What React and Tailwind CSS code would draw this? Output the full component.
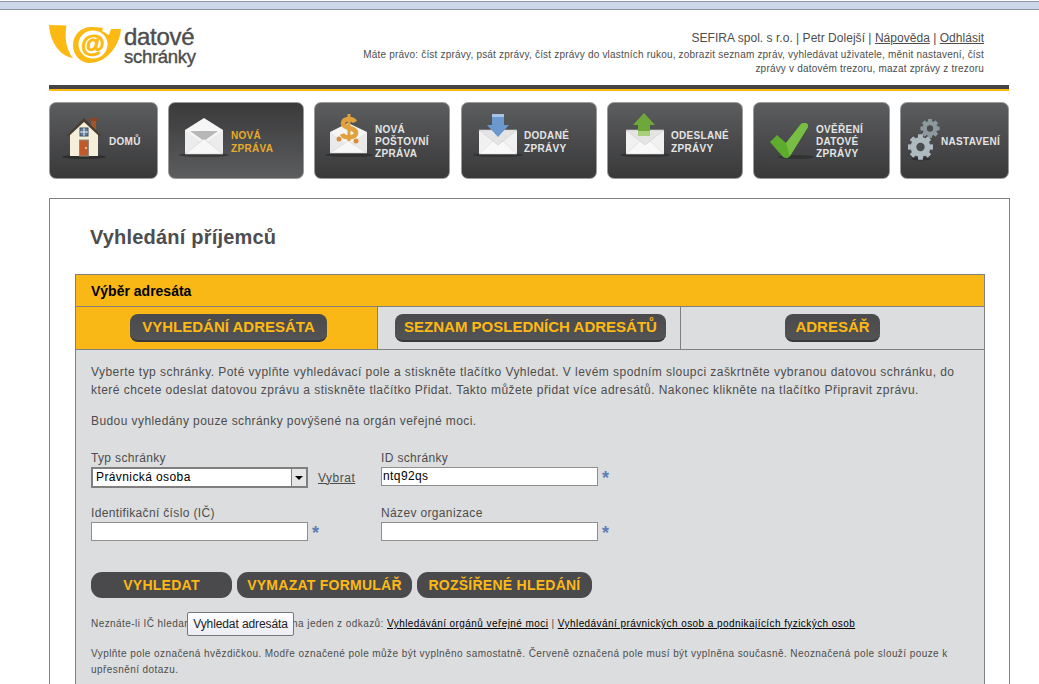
const navItems = [
  { w: 'w-[109px]', label: ['DOMŮ'], icon: <HouseIcon />, iconBox: 'w-[45px]' },
  { w: 'w-[136px]', label: ['NOVÁ', 'ZPRÁVA'], icon: <MailIcon />, active: true, iconBox: 'w-[48px]' },
  { w: 'w-[136px]', label: ['NOVÁ', 'POŠTOVNÍ', 'ZPRÁVA'], icon: <PostalIcon />, iconBox: 'w-[46px]' },
  { w: 'w-[136px] ml-[1px]', label: ['DODANÉ', 'ZPRÁVY'], icon: <InboxIcon />, iconBox: 'w-[48px]' },
  { w: 'w-[136px]', label: ['ODESLANÉ', 'ZPRÁVY'], icon: <SentIcon />, iconBox: 'w-[49px]' },
  { w: 'w-[137px]', label: ['OVĚŘENÍ', 'DATOVÉ', 'ZPRÁVY'], icon: <CheckIcon />, iconBox: 'w-[48px]' },
  { w: 'w-[109px]', label: ['NASTAVENÍ'], icon: <GearsIcon />, iconBox: 'w-[35px]', pad: 'pl-[5px]' },
];

// closed envelope, x0..x0+38, y 16..40 on the 48px icon canvas
function Envelope({ x = 0 }) {
  return (
    <g transform={`translate(${x},0)`}>
      <ellipse cx="19" cy="41" rx="25" ry="2" fill="#222" opacity="0.55" />
      <rect y="16" width="38" height="24" rx="1.5" fill="#f1f1f1" />
      <path d="M0 40 L14 27 L19 30 L24 27 L38 40 Z" fill="#f8f8f8" stroke="#d8d8d8" strokeWidth="0.6" />
      <path d="M0 16 L19 31 L38 16 Z" fill="#e4e4e4" stroke="#cdcdcd" strokeWidth="0.6" />
    </g>
  );
}

function Canvas({ children }) {
  return (
    <svg width="48" height="48" viewBox="0 0 48 48" className="block overflow-visible">
      {children}
    </svg>
  );
}

function HouseIcon() {
  return (
    <Canvas>
      <ellipse cx="20" cy="43" rx="22" ry="2" fill="#222" opacity="0.6" />
      <rect x="27" y="5" width="5" height="13" fill="#a4552c" />
      <rect x="26" y="4" width="7" height="3" fill="#8d4522" />
      <path d="M6 20 L20 6 L34 20 V42 H6 Z" fill="#f4eeda" />
      <path d="M3 21 L20 4 L37 21 L35 22 L20 8 L5 22 Z" fill="#4a3f33" />
      <rect x="16" y="14" width="8" height="8" fill="#5f7f9d" stroke="#3c4f60" />
      <path d="M20 14 V22 M16 18 H24" stroke="#e8eef2" strokeWidth="1" />
      <rect x="15.5" y="26" width="9" height="16" fill="#c05a28" stroke="#8d8a80" />
      <circle cx="22" cy="34" r="0.9" fill="#f5e6c0" />
    </Canvas>
  );
}

function MailIcon() {
  return (
    <Canvas>
      <ellipse cx="21" cy="41" rx="25" ry="2" fill="#222" opacity="0.55" />
      <path d="M2 16 L21 4 L40 16 V28 H2 Z" fill="#f6f6f6" />
      <path d="M7 17 H35 L21 27 Z" fill="#b7b7b7" />
      <path d="M2 16 L21 29 L40 16 V39 Q40 40 39 40 H3 Q2 40 2 39 Z" fill="#ececec" />
      <path d="M2 40 L21 25 L40 40 Z" fill="#f7f7f7" stroke="#d2d2d2" strokeWidth="0.6" />
    </Canvas>
  );
}

function PostalIcon() {
  return (
    <Canvas>
      <ellipse cx="20" cy="41" rx="24" ry="2" fill="#222" opacity="0.55" />
      <path d="M1 18 L19 9 L38 18 V30 H1 Z" fill="#f4f4f4" />
      <path d="M1 18 L19 31 L38 18 V39 H1 Z" fill="#e9e9e9" />
      <path d="M1 39 L19 27 L38 39 Z" fill="#f7f7f7" stroke="#d2d2d2" strokeWidth="0.6" />
      <path d="M26 8 C24 4 14 4 14 9 C14 15 27 13 27 19 C27 24 15 25 13 20" fill="none" stroke="#e0a13c" strokeWidth="4.6" />
      <path d="M20 0 V27" stroke="#e0a13c" strokeWidth="3" />
      <circle cx="10" cy="25" r="2.5" fill="#dd8d3a" />
      <circle cx="27" cy="27" r="2.5" fill="#dd8d3a" />
    </Canvas>
  );
}

function InboxIcon() {
  return (
    <Canvas>
      <Envelope x={3} />
      <path d="M16 0 H28 V11 H33 L22 23 L11 11 H16 Z" fill="#6b98cf" />
      <path d="M16 0 H28 V3 H16 Z" fill="#a5c4e8" />
    </Canvas>
  );
}

function SentIcon() {
  return (
    <Canvas>
      <Envelope x={4} />
      <path d="M22 -1 L33 11 H28 V22 H16 V11 H11 Z" fill="#6fa83a" />
      <path d="M16 17 H28 V22 H16 Z" fill="#a9cf7c" />
    </Canvas>
  );
}

function CheckIcon() {
  return (
    <Canvas>
      <ellipse cx="28" cy="43" rx="18" ry="2" fill="#222" opacity="0.5" />
      <path d="M2 28 L9 21 L18 29 L33 10 C36 8 41 9 40 13 L22 42 C20 45 17 44 15 43 Z" fill="#5fab2e" />
      <path d="M33 10 C36 8 41 9 40 13 L22 42 L18 29 Z" fill="#78be44" />
    </Canvas>
  );
}

function Gear({ cx, cy, r, fill }) {
  const teeth = [0, 45, 90, 135, 180, 225, 270, 315];
  return (
    <g>
      {teeth.map(a => (
        <rect key={a} x={cx - r * 0.24} y={cy - r * 1.25} width={r * 0.48} height={r * 2.5} fill={fill} transform={`rotate(${a} ${cx} ${cy})`} />
      ))}
      <circle cx={cx} cy={cy} r={r} fill={fill} />
      <circle cx={cx} cy={cy} r={r * 0.42} fill="#4b4c4e" />
    </g>
  );
}

function GearsIcon() {
  return (
    <Canvas>
      <ellipse cx="15" cy="45" rx="10" ry="1.5" fill="#222" opacity="0.6" />
      <Gear cx={24} cy={14.5} r={7.5} fill="#8e999f" />
      <Gear cx={14.5} cy={33} r={10} fill="#aeb9c0" />
    </Canvas>
  );
}

function Logo() {
  return (
    <div className="flex items-start h-[40px]">
      <svg width="73" height="40" viewBox="0 0 73 40" className="shrink-0">
        <path d="M0 0 L17.5 0.5 C15 14 18 26 24 33 C11 31 1 17 0 0 Z" fill="#fdb913" />
        <path d="M63 4 L72 4 C70 24 55 38 41 38 C31 38 24 30 24 20 C24 10 32 2 42 2 C50 2 55 3 63 4 Z" fill="#fdb913" />
        <ellipse cx="44" cy="19.5" rx="14.5" ry="14" fill="#fff" />
        <path d="M55 0 L63 1 L60 10 L53 6 Z" fill="#fff" />
        <text x="44" y="27" textAnchor="middle" fontFamily="Liberation Sans, sans-serif" fontWeight="700" fontSize="24" fill="#fdb913" stroke="#fdb913" strokeWidth="1.1">@</text>
      </svg>
      <div className="ml-[2px] text-[#4d4d4d] mt-[1px]">
        <div className="text-[24px] leading-[22px] tracking-[-0.3px] [-webkit-text-stroke:0.4px_#4d4d4d]">datové</div>
        <div className="text-[18.5px] leading-[17px] tracking-[-0.3px] [-webkit-text-stroke:0.4px_#4d4d4d]">schránky</div>
      </div>
    </div>
  );
}

function NavButton({ w, label, icon, active, iconBox, pad = 'pl-[14px]' }) {
  return (
    <div
      className={`${w} ${pad} h-[77px] flex rounded-[7px] border border-[#9a9a9a] ${
        active
          ? 'bg-gradient-to-b from-[#3a3a3b] to-[#5c5d5f]'
          : 'bg-gradient-to-b from-[#5c5d5f] to-[#39393a]'
      }`}
    >
      <div className={`${iconBox} shrink-0 pt-[11px]`}>{icon}</div>
      <div className={`self-center pt-[2px] text-[10px] font-bold tracking-[0.3px] ${label.length === 2 ? 'leading-[13px]' : 'leading-[12px]'} ${active ? 'text-[#e8ab2c]' : 'text-[#e4e4e4]'}`}>
        {label.map(l => (
          <div key={l}>{l}</div>
        ))}
      </div>
    </div>
  );
}

function PillButton({ children, className = '' }) {
  return (
    <span className={`inline-flex items-center justify-center h-[28px] rounded-[8px] border-b-2 border-[#38383a] bg-gradient-to-b from-[#4a4a4c] to-[#525355] text-[15px] font-bold text-[#fdb913] ${className}`}>
      {children}
    </span>
  );
}

function ActionButton({ children, className = '' }) {
  return (
    <span className={`inline-flex items-center justify-center h-[26px] rounded-[11px] bg-[#4a4a4c] text-[14px] tracking-[0.25px] font-bold text-[#fdb913] ${className}`}>
      {children}
    </span>
  );
}

function Field({ label, children }) {
  return (
    <div>
      <div className="text-[12px] leading-[14px] tracking-[0.35px] text-[#4d4d4d] mb-[2px]">{label}</div>
      {children}
    </div>
  );
}

function TextInput({ value = '' }) {
  return (
    <div className="flex items-center">
      <div className="w-[217px] h-[19px] bg-white border border-[#8f8f8f] text-[12px] leading-[17px] tracking-[0.4px] pl-[1px] text-black">{value}</div>
      <span className="ml-[4px] translate-y-[2px] text-[#5a7fb5] text-[18px] leading-[19px] font-bold">*</span>
    </div>
  );
}

export default function App() {
  return (
    <div className="h-[684px] overflow-hidden bg-white font-['Liberation_Sans',Arial,sans-serif]">
      <div className="h-[9px] mt-[1px] bg-[#ccd7ea] border-y border-[#8b95a5]" />
      <div className="ml-[49px] w-[960px] mt-[15px]">
        <header className="flex justify-between h-[60px]">
          <Logo />
          <div className="w-[650px] pr-[25px] text-right text-[#4d4d4d]">
            <div className="text-[12px] leading-[16px] mt-[5px] tracking-[0.03px]">
              SEFIRA spol. s r.o. | Petr Dolejší | <span className="underline">Nápověda</span> | <span className="underline">Odhlásit</span>
            </div>
            <div className="text-[10px] leading-[14px] mt-[2px] tracking-[0.2px]">
              Máte právo: číst zprávy, psát zprávy, číst zprávy do vlastních rukou, zobrazit seznam zpráv, vyhledávat uživatele, měnit nastavení, číst zprávy v datovém trezoru, mazat zprávy z trezoru
            </div>
          </div>
        </header>
        <div className="h-[6px] border-b-2 border-[#fdb913] bg-[#444446]" />
        <nav className="flex gap-[10px] mt-[11px]">
          {navItems.map(item => (
            <NavButton key={item.label.join(' ')} {...item} />
          ))}
        </nav>
      </div>

      <main className="ml-[49px] w-[961px] mt-[19px] border border-[#808080] pl-[25px] pr-[24px] h-[600px]">
        <h1 className="ml-[15px] mt-[27px] text-[20px] leading-[23px] tracking-[0.2px] font-bold text-[#4d4d4f]">Vyhledání příjemců</h1>
        <section className="mt-[25px] border border-[#808080] bg-[#dcddde]">
          <div className="h-[32px] bg-[#f9b816] border-b border-[#808080] pl-[15px] text-[14px] leading-[32px] font-bold text-black">Výběr adresáta</div>
          <div className="flex h-[43px] border-b border-[#808080]">
            <div className="w-[302px] bg-[#f9b816] border-r border-[#808080] flex justify-center items-center">
              <PillButton className="w-[197px] ml-[4px]">VYHLEDÁNÍ ADRESÁTA</PillButton>
            </div>
            <div className="w-[303px] border-r border-[#808080] flex justify-center items-center">
              <PillButton className="w-[271px] ml-[3px]">SEZNAM POSLEDNÍCH ADRESÁTŮ</PillButton>
            </div>
            <div className="flex-1 flex justify-center items-center">
              <PillButton className="w-[95px]">ADRESÁŘ</PillButton>
            </div>
          </div>

          <div className="px-[15px] pt-[13px] text-[#4d4d4d] h-[400px]">
            <p className="text-[12px] leading-[18px] tracking-[0.45px]">
              Vyberte typ schránky. Poté vyplňte vyhledávací pole a stiskněte tlačítko Vyhledat. V levém spodním sloupci zaškrtněte vybranou datovou schránku, do které chcete odeslat datovou zprávu a stiskněte tlačítko Přidat. Takto můžete přidat více adresátů. Nakonec klikněte na tlačítko Připravit zprávu.
            </p>
            <p className="mt-[13px] text-[12px] leading-[18px] tracking-[0.42px]">Budou vyhledány pouze schránky povýšené na orgán veřejné moci.</p>

            <div className="mt-[21px] grid grid-cols-[290px_1fr] gap-y-[18px]">
              <Field label="Typ schránky">
                <div className="flex items-center h-[21px]">
                  <div className="w-[217px] h-[21px] bg-white border-2 border-[#7f7f7f] flex justify-between text-[12px] leading-[17px] tracking-[0.4px] pl-[3px] text-black">
                    Právnická osoba
                    <span className="w-[15px] bg-[#e6e6e6] border-l border-[#7f7f7f] flex items-center justify-center">
                      <span className="w-0 h-0 border-x-[4px] border-x-transparent border-t-[4px] border-t-black" />
                    </span>
                  </div>
                  <span className="ml-[10px] text-[12px] tracking-[0.5px] underline">Vybrat</span>
                </div>
              </Field>
              <Field label="ID schránky"><TextInput value="ntq92qs" /></Field>
              <Field label="Identifikační číslo (IČ)"><TextInput /></Field>
              <Field label="Název organizace"><TextInput /></Field>
            </div>

            <div className="mt-[31px] flex gap-[5px]">
              <ActionButton className="w-[141px]">VYHLEDAT</ActionButton>
              <ActionButton className="w-[175px]">VYMAZAT FORMULÁŘ</ActionButton>
              <ActionButton className="w-[175px]">ROZŠÍŘENÉ HLEDÁNÍ</ActionButton>
            </div>

            <div className="relative mt-[19px] text-[10px] leading-[14px] tracking-[0.43px]">
              Neznáte-li IČ hledaného orgánu, klikněte na jeden z odkazů: <span className="underline text-black">Vyhledávání orgánů veřejné moci</span> | <span className="underline text-black">Vyhledávání právnických osob a podnikajících fyzických osob</span>
              <span className="absolute left-[96px] top-[-5px] h-[24px] w-[107px] bg-gradient-to-b from-white to-[#ececf4] border border-[#767676] rounded-[2px] text-[12px] leading-[22px] tracking-[-0.1px] text-center text-[#222]">Vyhledat adresáta</span>
            </div>
            <p className="mt-[15px] text-[10px] leading-[16px] tracking-[0.43px]">
              Vyplňte pole označená hvězdičkou. Modře označené pole může být vyplněno samostatně. Červeně označená pole musí být vyplněna současně. Neoznačená pole slouží pouze k upřesnění dotazu.
            </p>
          </div>
        </section>
      </main>
    </div>
  );
}
